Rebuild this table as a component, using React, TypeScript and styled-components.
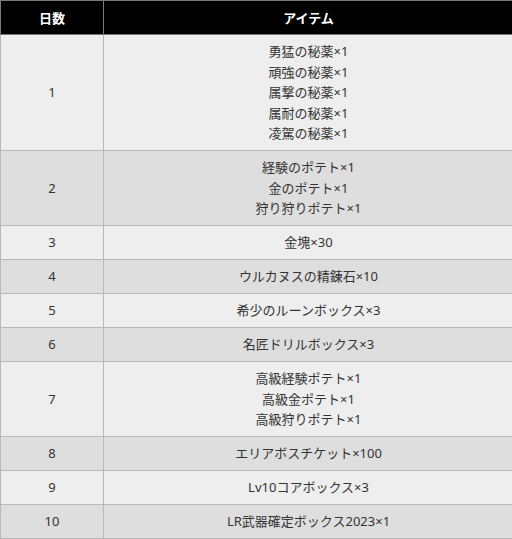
import React from "react";
import styled, { createGlobalStyle } from "styled-components";

const GlobalStyle = createGlobalStyle`
  html, body {
    margin: 0;
    padding: 0;
    background: #ffffff;
    overflow: hidden;
  }
  body {
    font-family: "Noto Sans", "Noto Sans CJK JP", sans-serif;
  }
`;

const Table = styled.table`
  width: 514px;
  border-collapse: collapse;
  table-layout: fixed;
  font-size: 13px;
  color: #333333;
`;

const HeadCell = styled.th<{ $width?: number }>`
  width: ${p => (p.$width ? `${p.$width}px` : "auto")};
  height: 33px;
  padding: 0;
  background: #000000;
  color: #ffffff;
  font-weight: bold;
  text-align: center;
  border: 1px solid #7a7a7a;
  line-height: 20px;
`;

const Row = styled.tr<{ $shade: boolean }>`
  background: ${p => (p.$shade ? "#dedede" : "#eeeeee")};
`;

const Cell = styled.td`
  padding: 6.25px 4px;
  text-align: center;
  vertical-align: middle;
  line-height: 20.5px;
  border: 1px solid #b8b8b8;
`;

const rewards: { day: number; items: string[] }[] = [
  {
    day: 1,
    items: [
      "勇猛の秘薬×1",
      "頑強の秘薬×1",
      "属撃の秘薬×1",
      "属耐の秘薬×1",
      "凌駕の秘薬×1"
    ]
  },
  { day: 2, items: ["経験のポテト×1", "金のポテト×1", "狩り狩りポテト×1"] },
  { day: 3, items: ["金塊×30"] },
  { day: 4, items: ["ウルカヌスの精錬石×10"] },
  { day: 5, items: ["希少のルーンボックス×3"] },
  { day: 6, items: ["名匠ドリルボックス×3"] },
  {
    day: 7,
    items: ["高級経験ポテト×1", "高級金ポテト×1", "高級狩りポテト×1"]
  },
  { day: 8, items: ["エリアボスチケット×100"] },
  { day: 9, items: ["Lv10コアボックス×3"] },
  { day: 10, items: ["LR武器確定ボックス2023×1"] }
];

export default function App() {
  return (
    <>
      <GlobalStyle />
      <Table>
        <thead>
          <tr>
            <HeadCell $width={102}>日数</HeadCell>
            <HeadCell>アイテム</HeadCell>
          </tr>
        </thead>
        <tbody>
          {rewards.map((r, i) => (
            <Row key={r.day} $shade={i % 2 === 1}>
              <Cell>{r.day}</Cell>
              <Cell>
                {r.items.map(item => (
                  <div key={item}>{item}</div>
                ))}
              </Cell>
            </Row>
          ))}
        </tbody>
      </Table>
    </>
  );
}
